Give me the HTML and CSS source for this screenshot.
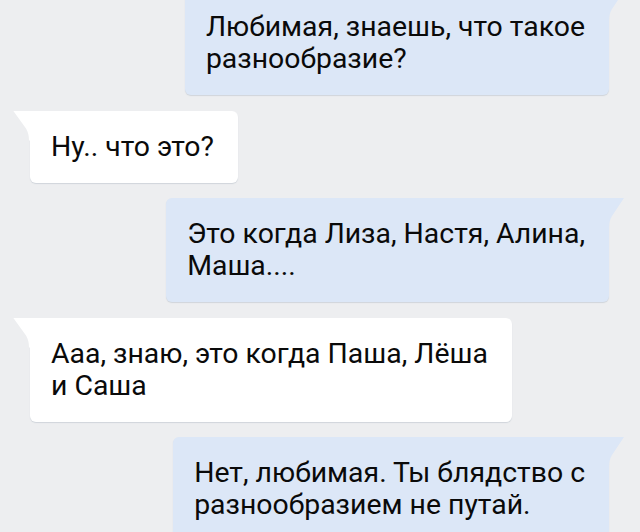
FILE: index.html
```html
<!DOCTYPE html>
<html lang="ru">

<head>
  <meta charset="UTF-8">
  <meta name="viewport" content="width=device-width, initial-scale=1.0">
  <title>Переписка</title>
  <link rel="stylesheet" href="styles.css">
</head>

<body>
  <div class="chat">
    <div class="msg msg--out">
      <p class="msg__text">Любимая, знаешь, что такое<br>разнообразие?</p>
    </div>

    <div class="msg msg--in">
      <p class="msg__text">Ну.. что это?</p>
    </div>

    <div class="msg msg--out">
      <p class="msg__text">Это когда Лиза, Настя, Алина,<br>Маша....</p>
    </div>

    <div class="msg msg--in">
      <p class="msg__text">Ааа, знаю, это когда Паша, Лёша<br>и Саша</p>
    </div>

    <div class="msg msg--out">
      <p class="msg__text">Нет, любимая. Ты блядство с<br>разнообразием не путай.</p>
    </div>
  </div>
</body>

</html>
```

FILE: styles.css
```css
* {
  box-sizing: border-box;
}

html,
body {
  height: 100%;
}

body {
  margin: 0;
  overflow: hidden;
  background-color: #edeef0;
  font-family: Roboto, "Noto Sans", sans-serif;
  font-size: 28.4px;
  line-height: 32px;
  color: #0a0a0a;
}

.chat {
  display: flex;
  flex-direction: column;
  gap: 15.5px;
  margin-top: -9px;
  padding: 0 15px 0 13px;
}

.msg {
  position: relative;
  width: max-content;
  padding: 20px 24px 20px 21px;
  border-radius: 6px;
  box-shadow: 0 1px 1px rgba(80, 100, 130, 0.18);
}

.msg__text {
  margin: 0;
}

.msg::before {
  content: "";
  position: absolute;
  top: 0;
  width: 17px;
  height: 30px;
}

.msg--out {
  align-self: flex-end;
  margin-right: 16px;
  border-top-right-radius: 0;
  background-color: #dce7f7;
}

.msg--out::before {
  right: -16px;
  background-color: #dce7f7;
  clip-path: path("M0 0 L16 0 L4 18 Q1 23 1 30 L0 30 Z");
}

.msg--in {
  align-self: flex-start;
  margin-left: 17px;
  border-top-left-radius: 0;
  background-color: #fff;
}

.msg--in::before {
  left: -17px;
  background-color: #fff;
  clip-path: path("M17 0 L0 0 L13 18 Q16 23 16 30 L17 30 Z");
}
```
